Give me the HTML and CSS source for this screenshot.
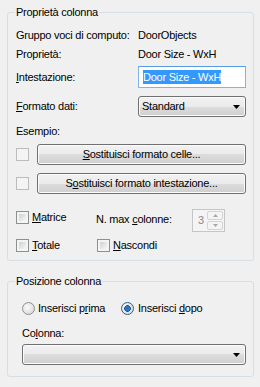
FILE: index.html
```html
<!DOCTYPE html>
<html>
<head>
<meta charset="utf-8">
<link rel="stylesheet" href="styles.css">
</head>
<body>
<div class="dialog">
  <fieldset class="group g1">
    <legend>Proprietà colonna</legend>
    <div class="row r-info1"><span class="lbl">Gruppo voci di computo:</span><span class="val">DoorObjects</span></div>
    <div class="row r-info2"><span class="lbl">Proprietà:</span><span class="val">Door Size - WxH</span></div>
    <div class="row r-input"><span class="lbl"><u>I</u>ntestazione:</span><div class="textbox"><span class="sel">Door Size - WxH</span></div></div>
    <div class="row r-select"><span class="lbl"><u>F</u>ormato dati:</span>
      <div class="combo"><span>Standard</span><svg class="arrow" width="7" height="4" viewBox="0 0 7 4"><polygon points="0,0 7,0 3.5,4" fill="#000"/></svg></div>
    </div>
    <div class="row r-esempio"><span>Esempio:</span></div>
    <div class="row r-btn1"><span class="chk dis"></span><button class="btn"><u>S</u>ostituisci formato celle...</button></div>
    <div class="row r-btn2"><span class="chk dis"></span><button class="btn">S<u>o</u>stituisci formato intestazione...</button></div>
    <div class="row r-opts1">
      <span class="cb"><span class="chk"></span><span><u>M</u>atrice</span></span>
      <span class="maxcol">N. max <u>c</u>olonne:</span>
      <div class="spin">
        <span class="spinval">3</span>
        <div class="spinbtns">
          <span class="sbtn"><svg width="5" height="3" viewBox="0 0 5 3"><polygon points="0,3 5,3 2.5,0" fill="#a7a7a7"/></svg></span>
          <span class="sbtn"><svg width="5" height="3" viewBox="0 0 5 3"><polygon points="0,0 5,0 2.5,3" fill="#a7a7a7"/></svg></span>
        </div>
      </div>
    </div>
    <div class="row r-opts2">
      <span class="cb"><span class="chk"></span><span><u>T</u>otale</span></span>
      <span class="cb nasc"><span class="chk"></span><span><u>N</u>ascondi</span></span>
    </div>
  </fieldset>

  <fieldset class="group g2">
    <legend>Posizione colonna</legend>
    <div class="row r-radio">
      <span class="rb"><span class="radio"></span><span>Inserisci p<u>r</u>ima</span></span>
      <span class="rb"><span class="radio on"></span><span>Inserisci <u>d</u>opo</span></span>
    </div>
    <div class="row r-collbl"><span>Co<u>l</u>onna:</span></div>
    <div class="row r-combo2">
      <div class="combo wide"><span></span><svg class="arrow" width="7" height="4" viewBox="0 0 7 4"><polygon points="0,0 7,0 3.5,4" fill="#000"/></svg></div>
    </div>
  </fieldset>
</div>
</body>
</html>
```

FILE: styles.css
```css
html, body {
  margin: 0;
  background: #f0f0f0;
}
body {
  font-family: "Liberation Sans", Arial, sans-serif;
  font-size: 11px;
  line-height: 13px;
  letter-spacing: -0.25px;
  color: #000;
}
u { text-decoration: underline; text-underline-offset: 1px; }

.dialog {
  display: flex;
  flex-direction: column;
  padding: 6px 6px 0 7px;
}

.group {
  margin: 0;
  min-width: 0;
  border: 1px solid #d5dfe5;
  border-radius: 3px;
  display: flex;
  flex-direction: column;
}
.group legend {
  padding: 0 1px;
  line-height: 13px;
}
.g1 { padding: 0 6px 6px 8px; }
.g1 legend { margin-left: -1px; }
.g2 { padding: 0 6px 11px 14px; margin-top: 14px; }
.g2 legend { margin-left: -7px; }

.row {
  display: flex;
  align-items: center;
}
.lbl { width: 122px; flex: none; }

.r-info1 { margin-top: 6px; height: 20px; }
.r-info2 { height: 18px; }
.r-input { margin-top: 3px; height: 22px; }
.r-select { margin-top: 8px; height: 21px; }
.r-esempio { margin-top: 5px; height: 18px; }
.r-btn1 { margin-top: 4px; height: 21px; }
.r-btn2 { margin-top: 8px; height: 21px; }
.r-opts1 { margin-top: 15px; height: 22px; }
.r-opts2 { margin-top: 5px; height: 18px; }

.textbox {
  box-sizing: border-box;
  width: 108px;
  height: 22px;
  border: 1px solid #7eb4ea;
  border-top-color: #569de5;
  background: #fff;
  padding: 0 4px;
  display: flex;
  align-items: center;
}
.sel {
  background: #3399ff;
  color: #fff;
  line-height: 14px;
}

.combo, .btn {
  box-sizing: border-box;
  border: 1px solid #707070;
  border-radius: 3px;
  background: linear-gradient(to bottom, #f2f2f2 0%, #ebebeb 50%, #dddddd 50%, #cfcfcf 100%);
  box-shadow: inset 0 0 0 1px #fbfbfb;
}
.combo {
  width: 108px;
  height: 21px;
  display: flex;
  align-items: center;
  justify-content: space-between;
  padding: 0 5px 0 3px;
}
.combo.wide { width: 224px; }

.btn {
  font: inherit;
  letter-spacing: inherit;
  color: #000;
  width: 209px;
  height: 21px;
  margin: 0 0 0 8px;
  padding: 0;
  text-align: center;
}

.chk {
  box-sizing: border-box;
  width: 13px;
  height: 13px;
  flex: none;
  border: 1px solid #8e8f8f;
  padding: 2px;
  background: linear-gradient(135deg, #cdd1d6, #f7f7f7) content-box, linear-gradient(#f4f4f4, #f4f4f4) border-box;
}
.chk.dis {
  border-color: #bcbcbc;
  background: #f4f4f4;
}

.r-opts1, .r-opts2 {
  display: grid;
  grid-template-columns: 80px 96px 33px;
  align-items: center;
}
.cb {
  display: flex;
  align-items: center;
  gap: 3px;
}
.r-opts1 .cb { margin-bottom: 6px; }
.r-opts1 .maxcol { margin-bottom: 2px; }
.cb.nasc { margin-left: 1px; }

.spin {
  box-sizing: border-box;
  width: 33px;
  height: 23px;
  border: 1px solid #c3c6c9;
  background: #f4f4f4;
  display: flex;
  color: #8a8a8a;
}
.spinval {
  flex: 1;
  padding-left: 5px;
  align-self: center;
}
.spinbtns {
  width: 16px;
  display: flex;
  flex-direction: column;
  padding: 1px 1px 1px 0;
  gap: 1px;
}
.sbtn {
  flex: 1;
  border: 1px solid #d4d4d4;
  border-radius: 2px;
  background: #f4f4f4;
  display: flex;
  align-items: center;
  justify-content: center;
}

.r-radio {
  margin-top: 11px;
  height: 18px;
  display: grid;
  grid-template-columns: 99px auto;
  align-items: center;
}
.rb {
  display: flex;
  align-items: center;
  gap: 3px;
}
.rb + .rb { gap: 4px; }
.radio {
  box-sizing: border-box;
  width: 13px;
  height: 13px;
  border-radius: 50%;
  border: 1px solid #8e8f8f;
  background: radial-gradient(circle at 40% 40%, #fbfbfb 0%, #e6e6e6 50%, #cfd0d2 100%);
}
.radio.on {
  border-color: #2c628b;
  background:
    radial-gradient(circle at 50% 50%, #1f6fc0 0, #2b7cd0 2px, #0e4f91 3px, transparent 3.6px),
    radial-gradient(circle at 40% 40%, #fbfbfb 0%, #e6e6e6 50%, #cfd0d2 100%);
}

.r-collbl { margin-top: 9px; height: 14px; }
.r-combo2 { margin-top: 4px; height: 21px; }
```
